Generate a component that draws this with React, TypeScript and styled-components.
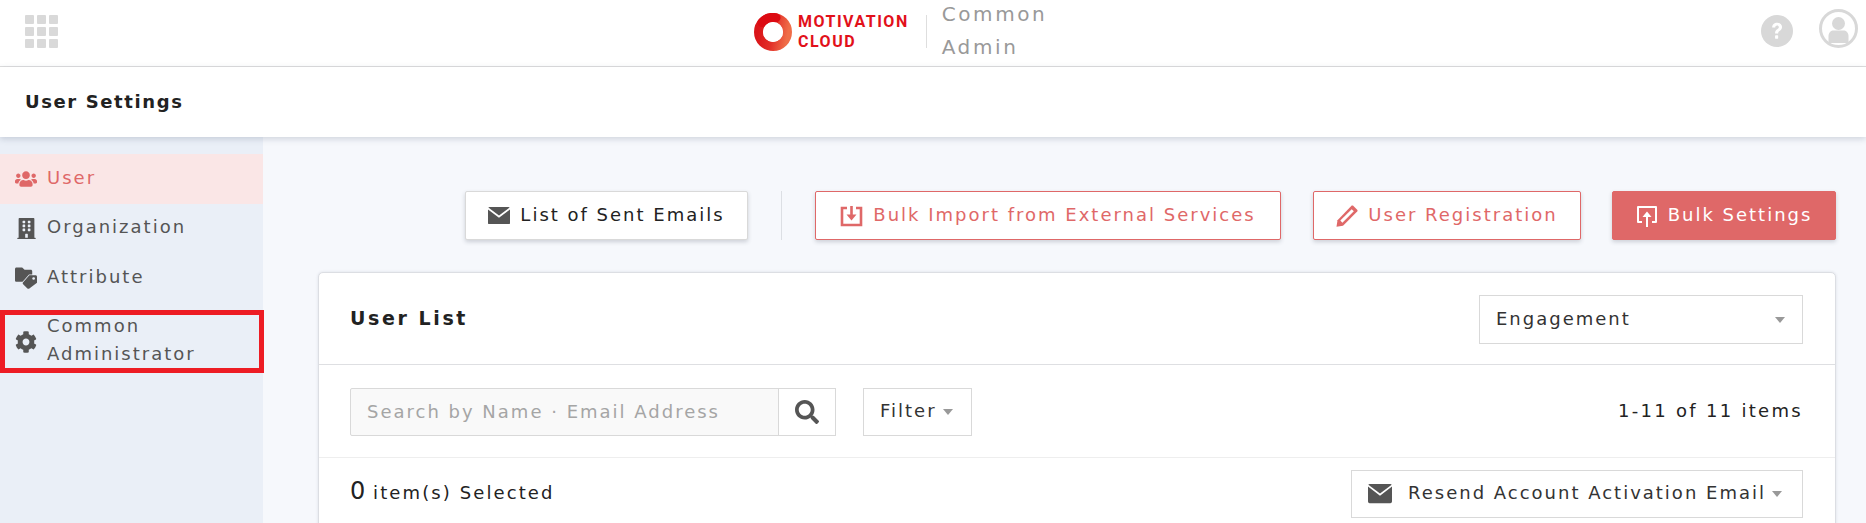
import React from "react";
import styled, { createGlobalStyle } from "styled-components";
import { FaBuilding, FaCog, FaSearch, FaUsers } from "react-icons/fa";

const GlobalStyle = createGlobalStyle`
    * {
        box-sizing: border-box;
    }

    html,
    body {
        margin: 0;
        height: 100%;
        overflow: hidden;
        background: #f6f8fc;
    }

    body {
        font-family: "DejaVu Sans", "Noto Sans", sans-serif;
        font-size: 18px;
        letter-spacing: 2px;
        color: #222;
    }
`;

const MailIcon = ({ size = 22 }: { size?: number }) => (
    <svg width={size} height={size * 0.8} viewBox="0 0 22 17.6">
        <path
            d="M1.500 0h19c.5 0 1 .3 1.200.6L11 8.600.3.6C.5.3 1 0 1.500 0z"
            fill="#555"
        />
        <path
            d="M0 2.400 11 10.800 22 2.400v13.700c0 .8-.7 1.500-1.500 1.500h-19C.7 17.600 0 16.900 0 16.100z"
            fill="#555"
        />
    </svg>
);

const ImportIcon = () => (
    <svg width="23" height="23" viewBox="0 0 23 23" fill="none">
        <path d="M7 4H2v17h19V4h-5" stroke="currentColor" strokeWidth="2.600" />
        <path d="M11.500 2v11" stroke="currentColor" strokeWidth="2.600" />
        <path d="M6.500 10.500h10l-5 6z" fill="currentColor" />
    </svg>
);

const UploadIcon = () => (
    <svg width="22" height="22" viewBox="0 0 22 22" fill="none">
        <path
            d="M6 17H2V2h18v15h-4"
            stroke="currentColor"
            strokeWidth="2"
            strokeLinejoin="round"
        />
        <path d="M11 22V10" stroke="currentColor" strokeWidth="2" />
        <path d="M6.500 12 11 6.500l4.500 5.500z" fill="currentColor" />
    </svg>
);

const PencilIcon = () => (
    <svg width="22" height="22" viewBox="0 0 22 22">
        <path
            d="M15.500.8c.5-.5 1.200-.5 1.700 0l4 4c.5.5.5 1.200 0 1.700L7 20.700.5 21.700l1-6.500z"
            fill="currentColor"
        />
        <path d="M15.700 4.200 17.800 6.300 6.400 17.700 4.300 15.600z" fill="#fff" />
    </svg>
);

const FolderTagIcon = () => (
    <svg width="23" height="22" viewBox="0 0 23 22">
        <path
            d="M1.500 0h6l2.500 2.500h6.500c.8 0 1.500.7 1.500 1.500v9.500c0 .8-.7 1.500-1.500 1.500h-15C.7 15 0 14.300 0 13.500v-12C0 .7.7 0 1.500 0z"
            fill="#555"
        />
        <path
            d="M15 8h6.500c.8 0 1.500.7 1.500 1.500V16l-8 6c-.6.400-1.400.4-2 0l-4.500-4.500c-.6-.6-.6-1.400 0-2z"
            fill="#555"
            stroke="#eaeff7"
            strokeWidth="1.500"
            paintOrder="stroke"
        />
        <circle cx="19.500" cy="11.500" r="1.400" fill="#eaeff7" />
    </svg>
);

const QuestionIcon = () => (
    <svg width="32" height="32" viewBox="0 0 33 33">
        <circle cx="16.500" cy="16.500" r="16.500" fill="#d8d8d8" />
        <path
            d="M11.500 13c0-3 2.200-5 5.200-5s5 1.900 5 4.500c0 2-1 3-2.500 4-1.300.9-1.500 1.300-1.500 2.700h-3.200c0-2.400.6-3.300 2.200-4.400 1.100-.8 1.700-1.300 1.700-2.200 0-1-.8-1.700-1.800-1.700-1.100 0-1.900.8-1.900 2.100z"
            fill="#fff"
        />
        <rect x="14.500" y="21" width="3.200" height="3.400" rx=".5" fill="#fff" />
    </svg>
);

const AvatarIcon = () => (
    <svg width="39" height="39" viewBox="0 0 39 39">
        <defs>
            <clipPath id="avatar-clip">
                <circle cx="19.500" cy="19.500" r="17.500" />
            </clipPath>
        </defs>
        <circle cx="19.500" cy="19.500" r="18" fill="none" stroke="#d8d8d8" strokeWidth="3" />
        <circle cx="19.500" cy="14.500" r="6.500" fill="#d8d8d8" />
        <path
            d="M9.500 32v-5c0-3.500 2.500-5.500 5-5.500h10c2.500 0 5 2 5 5.500v7h-20z"
            fill="#d8d8d8"
            clipPath="url(#avatar-clip)"
        />
    </svg>
);

const LogoRing = () => (
    <svg width="38" height="38" viewBox="0 0 38 38">
        <defs>
            <linearGradient id="ring-fill" x1="0" y1="0.4" x2="1" y2="0.6">
                <stop offset="0" stopColor="#da1519" />
                <stop offset="0.5" stopColor="#e22f28" />
                <stop offset="1" stopColor="#ef6d48" />
            </linearGradient>
        </defs>
        <circle cx="19" cy="19" r="14.500" fill="none" stroke="url(#ring-fill)" strokeWidth="9" />
        <path
            d="M8 9.500A14.500 14.500 0 0 1 22 4.800"
            fill="none"
            stroke="#dc0a12"
            strokeWidth="9"
            strokeLinecap="round"
        />
        <circle cx="19" cy="19" r="10" fill="#fff" />
    </svg>
);

const sideItems = [
    { label: "User", icon: <FaUsers size={22} />, active: true },
    { label: "Organization", icon: <FaBuilding size={21} /> },
    { label: "Attribute", icon: <FolderTagIcon /> },
];

const App = () => {
    return (
        <>
            <GlobalStyle />
            <Page>
                <Header>
                    <AppGrid aria-hidden>
                        {Array.from({ length: 9 }).map((_, i) => (
                            <AppDot key={i} />
                        ))}
                    </AppGrid>
                    <Brand>
                        <LogoRing />
                        <BrandName>
                            MOTIVATION
                            <br />
                            CLOUD
                        </BrandName>
                        <BrandRule />
                        <BrandProduct>
                            Common
                            <br />
                            Admin
                        </BrandProduct>
                    </Brand>
                    <HeaderIcons>
                        <QuestionSlot>
                            <QuestionIcon />
                        </QuestionSlot>
                        <AvatarIcon />
                    </HeaderIcons>
                </Header>
                <TitleBar>User Settings</TitleBar>
                <Body>
                    <Sidebar>
                        {sideItems.map((item) => (
                            <SideItem key={item.label} $active={item.active}>
                                <SideIcon>{item.icon}</SideIcon>
                                <SideLabel>{item.label}</SideLabel>
                            </SideItem>
                        ))}
                        <SideItemMarked>
                            <SideIcon>
                                <FaCog size={22} />
                            </SideIcon>
                            <SideLabel>
                                Common
                                <br />
                                Administrator
                            </SideLabel>
                        </SideItemMarked>
                    </Sidebar>
                    <Main>
                        <Toolbar>
                            <Button $width={283}>
                                <MailIcon />
                                <ButtonLabel>List of Sent Emails</ButtonLabel>
                            </Button>
                            <ToolbarRule />
                            <Button $variant="outline" $width={466}>
                                <ImportIcon />
                                <ButtonLabel>Bulk Import from External Services</ButtonLabel>
                            </Button>
                            <Button $variant="outline" $width={268}>
                                <PencilIcon />
                                <ButtonLabel>User Registration</ButtonLabel>
                            </Button>
                            <Button $variant="solid" $width={224}>
                                <UploadIcon />
                                <ButtonLabel>Bulk Settings</ButtonLabel>
                            </Button>
                        </Toolbar>
                        <Card>
                            <CardHead>
                                <CardTitle>User List</CardTitle>
                                <EngagementSelect>
                                    <SelectLabel>Engagement</SelectLabel>
                                    <Caret />
                                </EngagementSelect>
                            </CardHead>
                            <SearchRow>
                                <SearchInput>Search by Name · Email Address</SearchInput>
                                <SearchButton>
                                    <FaSearch size={24} color="#555" />
                                </SearchButton>
                                <FilterButton>
                                    <SelectLabel>Filter</SelectLabel>
                                    <Caret />
                                </FilterButton>
                                <Count>1-11 of 11 items</Count>
                            </SearchRow>
                            <SelectedRow>
                                <Selected>
                                    <SelectedNumber>0</SelectedNumber> item(s) Selected
                                </Selected>
                                <ResendSelect>
                                    <MailIcon size={24} />
                                    <ResendLabel>Resend Account Activation Email</ResendLabel>
                                    <Caret />
                                </ResendSelect>
                            </SelectedRow>
                        </Card>
                    </Main>
                </Body>
            </Page>
        </>
    );
};

export default App;

const Page = styled.div`
    width: 1866px;
    height: 523px;
    display: flex;
    flex-direction: column;
    overflow: hidden;
`;

const Header = styled.header`
    height: 67px;
    flex: none;
    display: flex;
    align-items: center;
    padding: 0 8px 3px 25px;
    background: #fff;
    border-bottom: 1px solid #dedede;
`;

const AppGrid = styled.div`
    width: 33px;
    display: grid;
    grid-template-columns: repeat(3, 9px);
    gap: 3px;
    margin-right: 696px;
`;

const AppDot = styled.span`
    height: 9px;
    background: #d9d9d9;
    border-radius: 1px;
`;

const Brand = styled.div`
    display: flex;
    align-items: center;
`;

const BrandName = styled.div`
    margin-left: 6px;
    font-family: "Roboto", "Liberation Sans", sans-serif;
    font-size: 16px;
    font-weight: 700;
    line-height: 20px;
    letter-spacing: 1.5px;
    color: #e2101a;
`;

const BrandRule = styled.span`
    width: 1px;
    height: 33px;
    margin: 0 15px 0 17px;
    background: #dedede;
`;

const BrandProduct = styled.div`
    margin-top: -2px;
    font-size: 20px;
    line-height: 33px;
    letter-spacing: 2.600px;
    color: #999;
`;

const HeaderIcons = styled.div`
    margin-left: auto;
    display: flex;
    align-items: center;
    gap: 26px;
    margin-top: -7px;
`;

const QuestionSlot = styled.span`
    display: flex;
    margin-top: 5px;
`;

const TitleBar = styled.div`
    height: 70px;
    flex: none;
    display: flex;
    align-items: center;
    padding: 0 0 2px 25px;
    background: #fff;
    font-weight: 700;
    letter-spacing: 1.600px;
    color: #222;
    box-shadow: 0 2px 6px rgba(70, 80, 110, 0.22);
    position: relative;
`;

const Body = styled.div`
    flex: 1;
    display: flex;
    min-height: 0;
`;

const Sidebar = styled.nav`
    width: 263px;
    flex: none;
    padding-top: 17px;
    background: #eaeff7;
`;

const SideItem = styled.div<{ $active?: boolean }>`
    height: 49.500px;
    display: flex;
    align-items: center;
    padding-left: 15px;
    color: ${({ $active }) => ($active ? "#df6868" : "#555")};
    background: ${({ $active }) => ($active ? "#fae6e6" : "transparent")};
`;

const SideItemMarked = styled(SideItem)`
    width: 264px;
    height: 63px;
    margin-top: 7.500px;
    padding-left: 10px;
    line-height: 28.500px;
    border: 5px solid #ed1c24;
`;

const SideIcon = styled.span`
    width: 22px;
    margin-right: 10px;
    display: flex;
    justify-content: center;
    flex: none;
`;

const SideLabel = styled.span`
    margin-top: -3px;
`;

const Main = styled.main`
    flex: 1;
    min-width: 0;
    padding: 54px 30px 0 55px;
`;

const Toolbar = styled.div`
    display: flex;
    justify-content: flex-end;
    align-items: center;
    gap: 32px;
`;

const ToolbarRule = styled.span`
    width: 1px;
    height: 49px;
    margin: 0 1px;
    background: #dcdfe4;
`;

const Button = styled.div<{ $variant?: "outline" | "solid"; $width: number }>`
    height: 49px;
    width: ${({ $width }) => $width}px;
    margin-left: ${({ $variant }) => ($variant === "solid" ? "-1px" : "0")};
    display: flex;
    align-items: center;
    justify-content: center;
    gap: 10px;
    border-radius: 2px;
    box-shadow: 0 2px 4px rgba(40, 50, 70, 0.2);
    color: ${({ $variant }) =>
        $variant === "solid" ? "#fff" : $variant === "outline" ? "#df6868" : "#222"};
    background: ${({ $variant }) => ($variant === "solid" ? "#df6868" : "#fff")};
    border: 1px solid ${({ $variant }) => ($variant ? "#df6868" : "#d9d9d9")};
`;

const ButtonLabel = styled.span`
    margin-top: -3px;
    white-space: nowrap;
`;

const Card = styled.section`
    margin-top: 32px;
    background: #fff;
    border: 1px solid #dcdee3;
    border-radius: 5px 5px 0 0;
    box-shadow: 0 0 3px rgba(40, 50, 70, 0.12);
`;

const CardHead = styled.div`
    height: 92px;
    display: flex;
    align-items: center;
    justify-content: space-between;
    padding: 2px 32px 0 31px;
    border-bottom: 1px solid #dedfe2;
`;

const CardTitle = styled.h2`
    margin: -3px 0 0;
    font-size: 19px;
    font-weight: 700;
    letter-spacing: 2.600px;
    color: #222;
`;

const Caret = styled.span`
    width: 0;
    height: 0;
    margin-left: 6px;
    border-left: 5px solid transparent;
    border-right: 5px solid transparent;
    border-top: 6px solid #999;
    flex: none;
`;

const SelectLabel = styled.span`
    margin-top: -3px;
`;

const EngagementSelect = styled.div`
    width: 324px;
    height: 49px;
    display: flex;
    align-items: center;
    justify-content: space-between;
    padding: 0 17px 0 16px;
    border: 1px solid #d9d9d9;
    color: #333;
`;

const SearchRow = styled.div`
    height: 93px;
    display: flex;
    align-items: center;
    padding: 2px 32px 0 31px;
    border-bottom: 1px solid #eeeeee;
`;

const SearchInput = styled.div`
    width: 429px;
    height: 48px;
    display: flex;
    align-items: center;
    padding: 0 0 2px 16px;
    background: #f9f9f9;
    border: 1px solid #d9d9d9;
    border-radius: 2px 0 0 2px;
    white-space: nowrap;
    color: #a5a5a5;
`;

const SearchButton = styled.div`
    width: 58px;
    height: 48px;
    margin-left: -1px;
    display: flex;
    align-items: center;
    justify-content: center;
    border: 1px solid #d9d9d9;
`;

const FilterButton = styled.div`
    width: 109px;
    height: 48px;
    margin-left: 27px;
    display: flex;
    align-items: center;
    padding-left: 16px;
    border: 1px solid #d9d9d9;
    color: #333;
`;

const Count = styled.div`
    margin: -3px 0 0 auto;
    letter-spacing: 2.300px;
    color: #222;
`;

const SelectedRow = styled.div`
    height: 120px;
    display: flex;
    align-items: flex-start;
    justify-content: space-between;
    padding: 12px 32px 0 31px;
`;

const Selected = styled.div`
    margin-top: 7px;
    letter-spacing: 2.100px;
    color: #222;
`;

const SelectedNumber = styled.span`
    font-size: 24px;
    letter-spacing: 0;
`;

const ResendSelect = styled.div`
    width: 452px;
    height: 48px;
    display: flex;
    align-items: center;
    padding: 0 16px;
    border: 1px solid #d9d9d9;
    color: #333;
`;

const ResendLabel = styled.span`
    margin: -3px 0 0 16px;
    white-space: nowrap;
`;
